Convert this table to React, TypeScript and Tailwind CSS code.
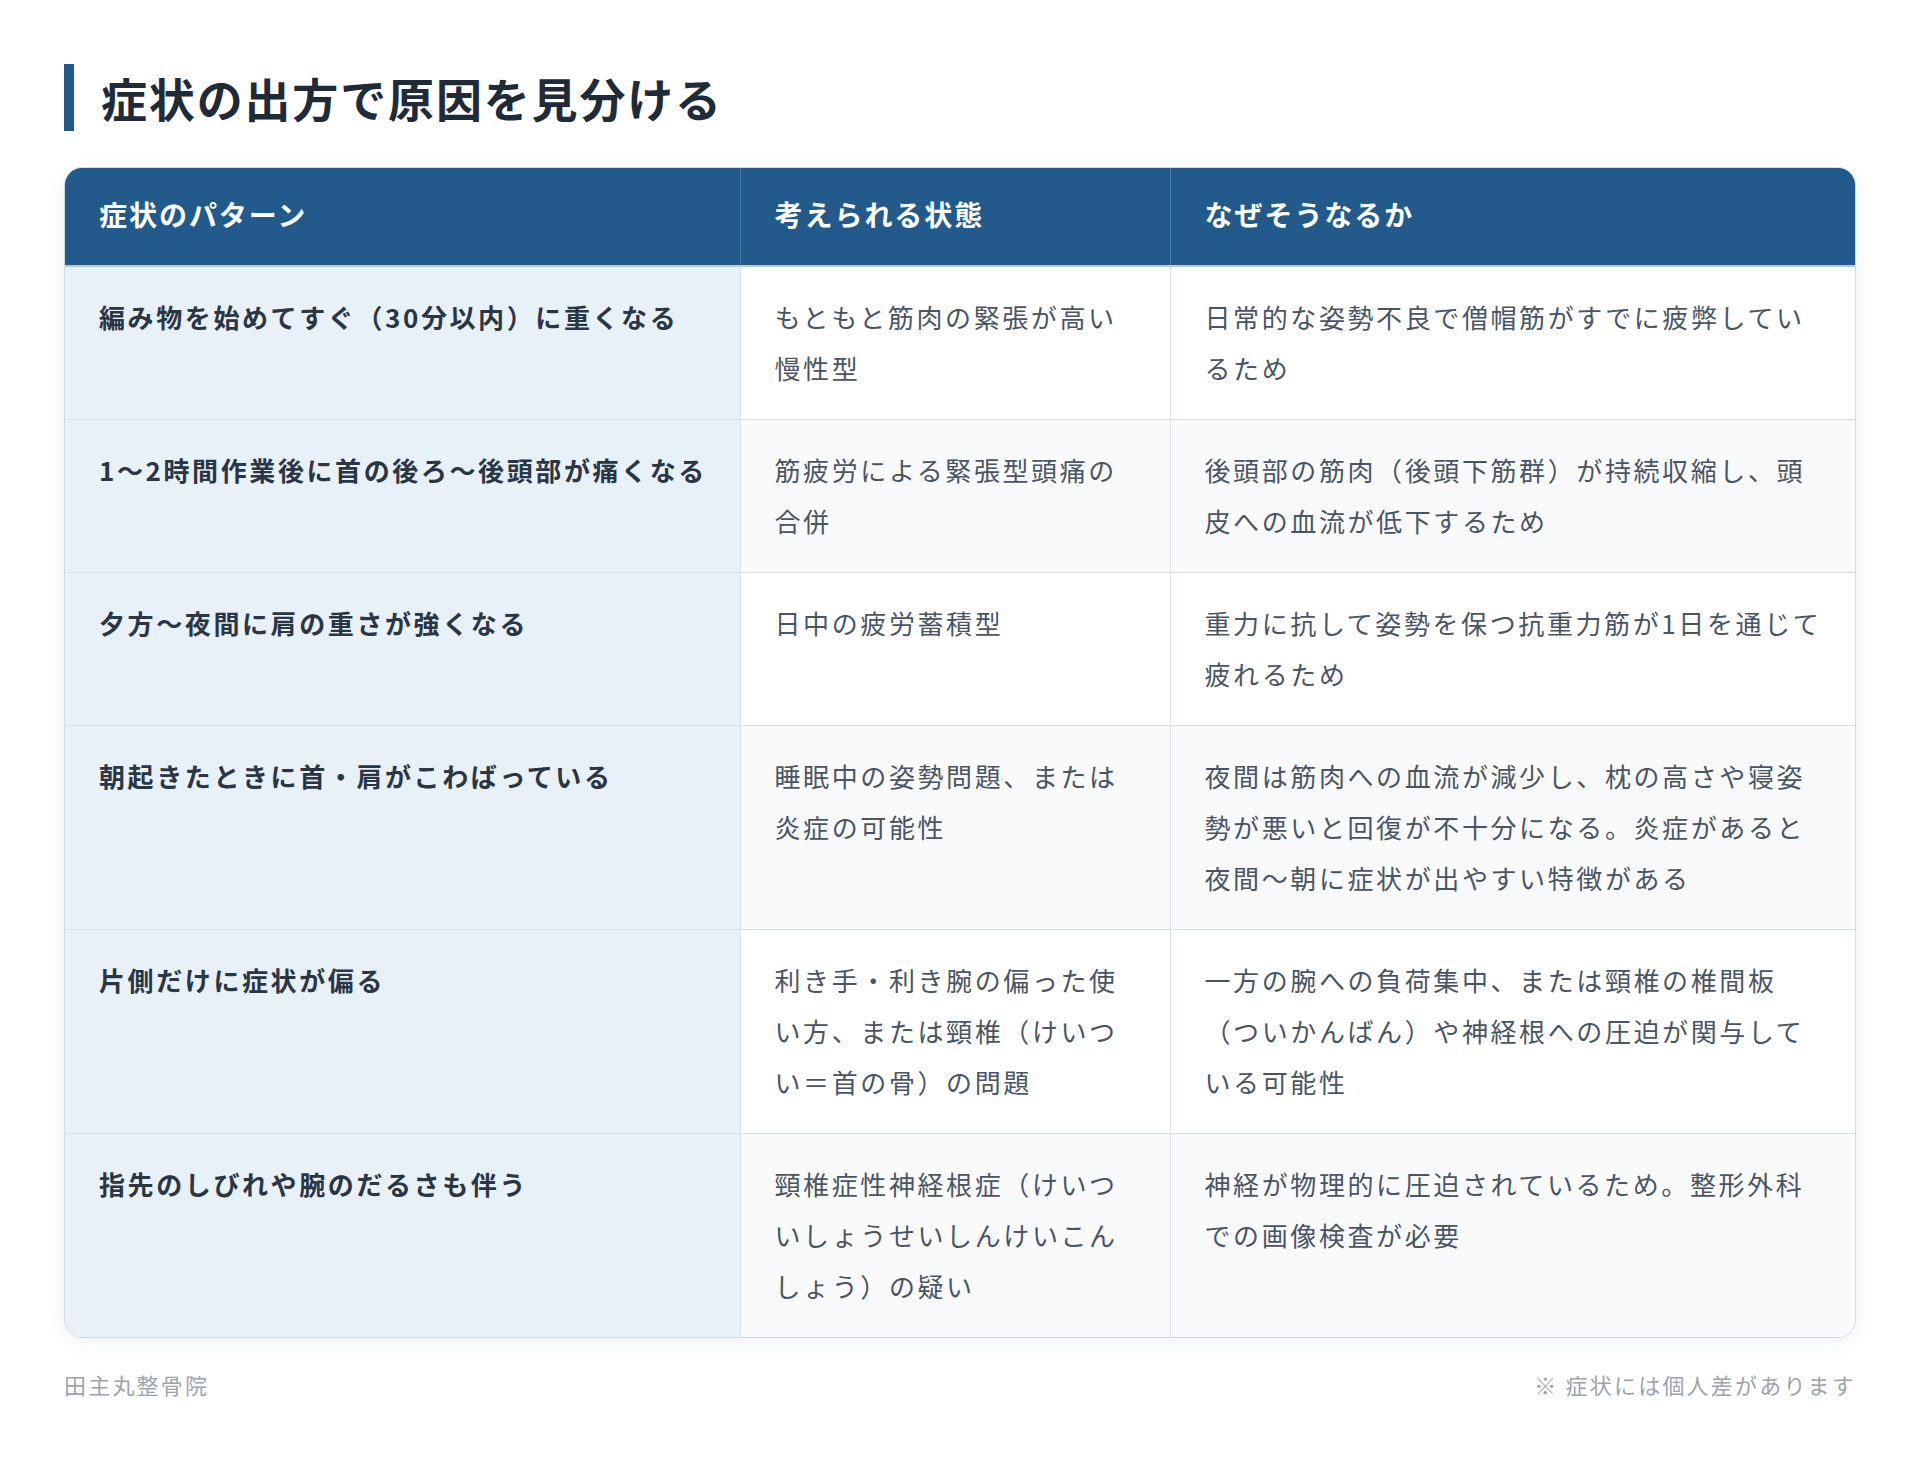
const rows = [
  {
    pattern: "編み物を始めてすぐ（30分以内）に重くなる",
    state: "もともと筋肉の緊張が高い慢性型",
    reason: "日常的な姿勢不良で僧帽筋がすでに疲弊しているため",
  },
  {
    pattern: "1〜2時間作業後に首の後ろ〜後頭部が痛くなる",
    state: "筋疲労による緊張型頭痛の合併",
    reason: "後頭部の筋肉（後頭下筋群）が持続収縮し、頭皮への血流が低下するため",
  },
  {
    pattern: "夕方〜夜間に肩の重さが強くなる",
    state: "日中の疲労蓄積型",
    reason: "重力に抗して姿勢を保つ抗重力筋が1日を通じて疲れるため",
  },
  {
    pattern: "朝起きたときに首・肩がこわばっている",
    state: "睡眠中の姿勢問題、または炎症の可能性",
    reason: "夜間は筋肉への血流が減少し、枕の高さや寝姿勢が悪いと回復が不十分になる。炎症があると夜間〜朝に症状が出やすい特徴がある",
  },
  {
    pattern: "片側だけに症状が偏る",
    state: "利き手・利き腕の偏った使い方、または頸椎（けいつい＝首の骨）の問題",
    reason: "一方の腕への負荷集中、または頸椎の椎間板（ついかんばん）や神経根への圧迫が関与している可能性",
  },
  {
    pattern: "指先のしびれや腕のだるさも伴う",
    state: "頸椎症性神経根症（けいついしょうせいしんけいこんしょう）の疑い",
    reason: "神経が物理的に圧迫されているため。整形外科での画像検査が必要",
  },
];

export default function App() {
  return (
    <div className="min-h-[1472px] bg-white px-[64px] pt-[64px] font-['Noto_Sans_CJK_JP','Noto_Sans',sans-serif]">
      <h2 className="border-l-[10px] border-[#215a8b] pl-[27px] text-[46px] font-bold leading-[67px] tracking-[0.04em] text-[#1f2b38]">
        症状の出方で原因を見分ける
      </h2>

      <div className="mt-[36px] overflow-hidden rounded-[18px] border border-[#cfdbe7] shadow-[0_4px_18px_rgba(30,60,90,0.07)]">
        <table className="w-full table-fixed border-collapse">
          <colgroup>
            <col className="w-[675px]" />
            <col className="w-[430px]" />
            <col />
          </colgroup>
          <thead>
            <tr className="bg-[#215a8b] text-white">
              <th className="border-b-2 border-[#b6cadc] px-[34px] pt-[24px] pb-[28px] text-left text-[28px] font-bold leading-[45px] tracking-[0.07em]">
                症状のパターン
              </th>
              <th className="border-b-2 border-l border-[#b6cadc] border-l-[#4a7aa5] px-[34px] pt-[24px] pb-[28px] text-left text-[28px] font-bold leading-[45px] tracking-[0.07em]">
                考えられる状態
              </th>
              <th className="border-b-2 border-l border-[#b6cadc] border-l-[#4a7aa5] px-[34px] pt-[24px] pb-[28px] text-left text-[28px] font-bold leading-[45px] tracking-[0.07em]">
                なぜそうなるか
              </th>
            </tr>
          </thead>
          <tbody>
            {rows.map((r, i) => (
              <tr
                key={i}
                className={`${i % 2 === 1 ? "bg-[#f8fafc]" : "bg-white"} ${i < rows.length - 1 ? "border-b border-[#d4e0ea]" : ""}`}
              >
                <td className="whitespace-nowrap bg-[#e8f0f8] px-[34px] pt-[24px] pb-[26px] align-top text-[26px] font-bold leading-[51px] tracking-[0.1em] text-[#2b3644]">
                  {r.pattern}
                </td>
                <td className="border-l border-[#d4e0ea] px-[34px] pt-[24px] pb-[26px] align-top text-[26px] leading-[51px] tracking-[0.1em] text-[#4a5563]">
                  {r.state}
                </td>
                <td className="border-l border-[#d4e0ea] pl-[34px] pr-[26px] pt-[24px] pb-[26px] align-top text-[26px] leading-[51px] tracking-[0.1em] text-[#4a5563]">
                  {r.reason}
                </td>
              </tr>
            ))}
          </tbody>
        </table>
      </div>

      <div className="mt-[29px] flex items-center justify-between text-[22px] leading-[34px] tracking-[0.1em] text-[#9ba4ae]">
        <span>田主丸整骨院</span>
        <span>※ 症状には個人差があります</span>
      </div>
    </div>
  );
}
